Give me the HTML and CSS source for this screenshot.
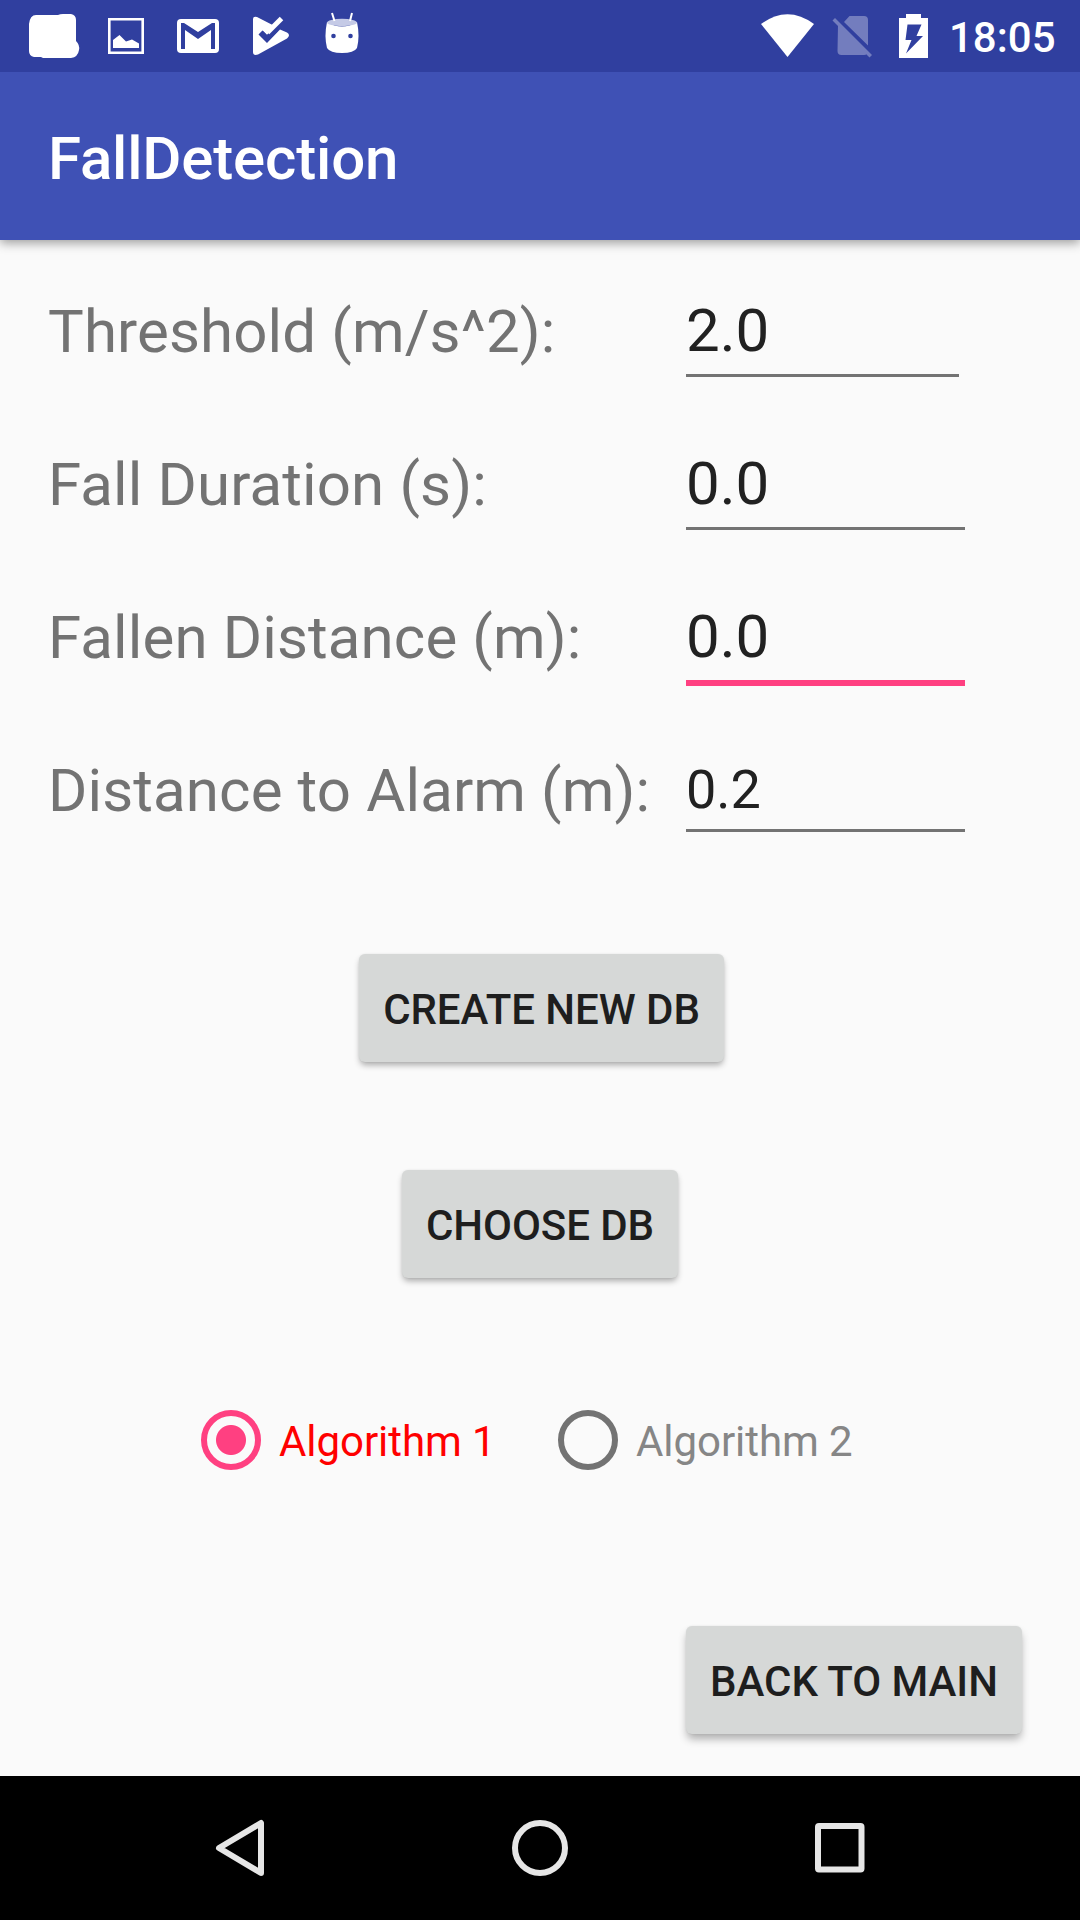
FILE: index.html
```html
<!DOCTYPE html>
<html lang="en">
<head>
<meta charset="utf-8">
<title>FallDetection</title>
<link rel="stylesheet" href="styles.css">
</head>
<body>
<div class="screen">
  <div class="status-bar">
    <div class="status-icons">
      <svg class="notice" viewBox="18 0 72 72"><path d="M36 15H58Q60 14 63 14H71Q76 15 76 20V41Q80 45 79 50Q78 57 71 58H43L41 57H34Q29 56 29 51V24Q30 15 36 15Z"/></svg>
      <svg class="notice" viewBox="90 0 72 72"><path fill-rule="evenodd" d="M108 18H144V54H108ZM110.600 20.600V51.400H141.400V20.600Z"/><path d="M113 48V40L119.500 35L126 41.500L132 39.500L139 43.500V48Z"/></svg>
      <svg class="notice" viewBox="162 0 72 72"><rect x="177" y="19" width="42" height="34" rx="4"/><path class="cut" d="M181 23H184L198 32L212 23H215V49H211V30L198 39L185 30V49H181Z"/></svg>
      <svg class="notice" viewBox="234 0 72 72"><path d="M253 19Q253 16 257 17L275.500 26.500L267 35L262.500 30.500L258.500 34.500L267 43L280 29.500L287 32.500Q291 35 287 38.500L258 54.500Q253 56 253 52Z"/><path class="check" d="M261 32.500L267 38.500L276 29.500"/><path class="tick" d="M267.500 32.500L281.500 18.500"/></svg>
      <svg class="notice" viewBox="306 0 72 72"><path d="M327 22Q342 31 357 22Q360 36 357 48Q354 53 342 53Q330 53 327 48Q324 36 327 22Z"/><ellipse class="lid" cx="342" cy="22.500" rx="15" ry="3.700"/><path class="antenna" d="M332 13L334.500 21M352 13L350 21"/><circle class="cut" cx="333.500" cy="36" r="2.300"/><circle class="cut" cx="350.500" cy="36" r="2.300"/></svg>
    </div>
    <div class="status-system">
      <svg class="wifi" viewBox="755 0 65 72"><path d="M761 24Q787.500 4.500 814 24L787.500 57Z"/></svg>
      <svg class="sim" viewBox="820 0 65 72"><path d="M849.500 16H864Q868 16 868 20V45.500L844 22ZM838 24.500L867 53.500Q866 55 864 55H841.500Q837.500 55 837.500 51Z"/><path d="M835 18L872 55L869.500 57.500L832.500 20.500Z"/></svg>
      <svg class="battery" viewBox="885 0 57 72"><path fill-rule="evenodd" d="M906 14H921V18H928V58H899V18H906ZM907.500 24.500L905.500 40H911.500L906 53.500L923 36H916.500L921.500 24.500Z"/></svg>
      <span class="clock">18:05</span>
    </div>
  </div>
  <header class="app-bar">FallDetection</header>
  <main class="content">
    <div class="form">
      <div class="label">Threshold (m/s^2):</div><div class="field narrow">2.0</div>
      <div class="label">Fall Duration (s):</div><div class="field">0.0</div>
      <div class="label">Fallen Distance (m):</div><div class="field focused">0.0</div>
      <div class="label">Distance to Alarm (m):</div><div class="field small">0.2</div>
    </div>
    <div class="button create">CREATE NEW DB</div>
    <div class="button choose">CHOOSE DB</div>
    <div class="radios">
      <div class="radio selected"><span class="ring"></span><span>Algorithm 1</span></div>
      <div class="radio"><span class="ring"></span><span>Algorithm 2</span></div>
    </div>
    <div class="button back">BACK TO MAIN</div>
  </main>
  <nav class="nav-bar">
    <svg class="nav-icon" viewBox="0 0 72 72"><path d="M57 11V61L15 36Z"/></svg>
    <svg class="nav-icon" viewBox="0 0 72 72"><circle cx="36" cy="36" r="25"/></svg>
    <svg class="nav-icon" viewBox="0 0 72 72"><rect x="14" y="14" width="43.500" height="43.500" rx="1"/></svg>
  </nav>
</div>
</body>
</html>
```
FILE: styles.css
```css
* { box-sizing: border-box; }
body { margin: 0; font-family: Roboto, sans-serif; background: #fafafa; }
.screen { width: 1080px; height: 1920px; display: flex; flex-direction: column; overflow: hidden; }
svg { display: block; flex: none; }

.status-bar { height: 72px; background: #303f9f; display: flex; justify-content: space-between; padding: 0 24px 0 18px; flex: none; z-index: 2; }
.status-icons, .status-system { display: flex; fill: #fff; }
.notice { width: 72px; height: 72px; }
.cut { fill: #303f9f; }
.check { fill: none; stroke: #303f9f; stroke-width: 5; }
.tick { fill: none; stroke: #fff; stroke-width: 5; }
.lid { fill: #c5cae6; }
.antenna { fill: none; stroke: #fff; stroke-width: 2; }
.wifi, .sim { width: 65px; height: 72px; }
.sim { opacity: .32; }
.battery { width: 57px; height: 72px; }
.clock { width: 114px; padding-left: 7px; font-size: 42px; font-weight: 500; line-height: 76px; color: #fff; white-space: nowrap; }

.app-bar { height: 168px; flex: none; background: #3f51b5; color: #fff; font-size: 60px; font-weight: 500; line-height: 174px; letter-spacing: -.17px; padding-left: 48px; box-shadow: 0 3px 10px rgba(0, 0, 0, .38); z-index: 1; }

.content { height: 1536px; flex: none; padding-top: 55px; display: flex; flex-direction: column; align-items: flex-start; }
.form { display: grid; grid-template-columns: 638px 279px; grid-template-rows: repeat(4, 153px); padding-left: 48px; align-items: start; }
.label { font-size: 60px; line-height: 70px; letter-spacing: .13px; color: #737373; padding-top: 2px; white-space: nowrap; }
.field { font-size: 60px; line-height: 70px; color: #212121; padding-top: 1px; padding-bottom: 8px; border-bottom: 3px solid #737373; }
.narrow { width: 273px; }
.focused { border-bottom: 6px solid #ff4081; }
.small { font-size: 54px; line-height: 64px; padding-top: 4px; padding-bottom: 7px; }

.button { height: 108px; border-radius: 6px; background: #d6d8d7; color: #1e1e1e; font-size: 42px; font-weight: 500; line-height: 111px; letter-spacing: -.06px; text-align: center; white-space: nowrap; box-shadow: 0 4px 6px -1px rgba(0, 0, 0, .32), 0 0 2px rgba(0, 0, 0, .08); }
.create { width: 365px; margin: 47px 0 0 359px; }
.choose { width: 276px; margin: 108px 0 0 402px; }
.back { width: 336px; margin: 156px 0 0 686px; box-shadow: 0 6px 8px -1px rgba(0, 0, 0, .3), 0 0 2px rgba(0, 0, 0, .08); }

.radios { display: flex; padding-left: 201px; margin-top: 132px; height: 60px; }
.radio { width: 357px; display: flex; gap: 18px; font-size: 42px; line-height: 63px; letter-spacing: -.06px; color: #868686; white-space: nowrap; }
.ring { width: 60px; height: 60px; border: 6px solid #737373; border-radius: 50%; }
.selected { color: #f00; }
.selected .ring { border-color: #ff4081; background: radial-gradient(circle, #ff4081 14.5px, transparent 15.5px); }

.nav-bar { height: 144px; flex: none; background: #000; display: flex; justify-content: center; align-items: center; gap: 228px; }
.nav-icon { width: 72px; height: 72px; fill: none; stroke: #e6e6e6; stroke-width: 6; stroke-linejoin: round; }
```
